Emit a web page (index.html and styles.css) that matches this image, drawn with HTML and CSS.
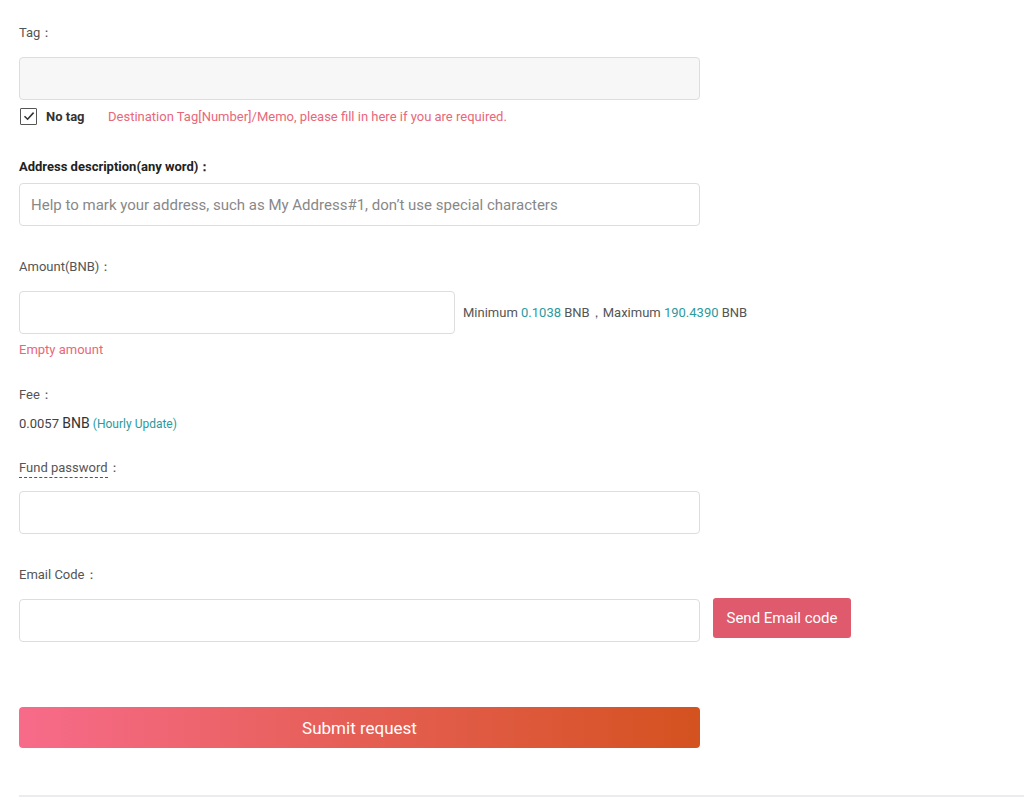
FILE: index.html
```html
<!DOCTYPE html>
<html lang="en">
<head>
  <meta charset="UTF-8" />
  <meta name="viewport" content="width=device-width, initial-scale=1.0"/>
  <title>Withdraw BNB</title>
  <link rel="stylesheet" href="styles.css">
</head>
<body>
  <form class="withdraw">

    <!-- Tag -->
    <div class="field tag-field">
      <label class="label">Tag：</label>
      <input class="input input-grey" type="text" />
      <div class="tag-row">
        <span class="checkbox">
          <svg width="14" height="14" viewBox="0 0 14 14"><path d="M2.5 7.2 L5.6 10.2 L11.6 3.6" fill="none" stroke="#333" stroke-width="1.6"/></svg>
        </span>
        <span class="no-tag">No tag</span>
        <span class="hint-red">Destination Tag[Number]/Memo, please fill in here if you are required.</span>
      </div>
    </div>

    <!-- Address description -->
    <div class="field">
      <label class="label label-bold">Address description(any word)：</label>
      <input class="input" type="text" placeholder="Help to mark your address, such as My Address#1, don’t use special characters" />
    </div>

    <!-- Amount -->
    <div class="field field-amount">
      <label class="label">Amount(BNB)：</label>
      <div class="amount-row">
        <input class="input input-amount" type="text" />
        <span class="limits">Minimum <em>0.1038</em> BNB，Maximum <em>190.4390</em> BNB</span>
      </div>
      <p class="hint-red error">Empty amount</p>
    </div>

    <!-- Fee -->
    <div class="field field-fee">
      <label class="label">Fee：</label>
      <p class="fee">0.0057 <b>BNB</b> <span class="teal">(Hourly Update)</span></p>
    </div>

    <!-- Fund password -->
    <div class="field field-fund">
      <label class="label"><span class="dotted">Fund password</span>：</label>
      <input class="input" type="password" />
    </div>

    <!-- Email code -->
    <div class="field">
      <label class="label">Email Code：</label>
      <div class="code-row">
        <input class="input" type="text" />
        <button type="button" class="btn-send">Send Email code</button>
      </div>
    </div>

    <button type="button" class="btn-submit">Submit request</button>
  </form>
  <div class="bottom-line"></div>
</body>
</html>
```

FILE: styles.css
```css
* {
  margin: 0;
  padding: 0;
  box-sizing: border-box;
}
body {
  font-family: Roboto, "Liberation Sans", sans-serif;
  font-size: 13px;
  color: #555;
  background: #fff;
  padding: 0 0 0 19px;
}
.withdraw {
  width: 681px;
  padding-top: 24px;
}
.field {
  display: flex;
  flex-direction: column;
  margin-bottom: 32px;
}
.label {
  display: block;
  line-height: 18px;
  margin-bottom: 15px;
  color: #555;
}
.label-bold {
  font-weight: bold;
  color: #222;
  margin-bottom: 7px;
}
.input {
  width: 100%;
  height: 43px;
  border: 1px solid #ddd;
  border-radius: 4px;
  background: #fff;
  padding: 0 11px;
  font-family: inherit;
  font-size: 15px;
  color: #333;
  outline: none;
}
.input::placeholder {
  color: #888;
}
.input-grey {
  background: #f7f7f7;
}
.tag-field {
  margin-bottom: 33px;
}
.tag-row {
  display: flex;
  align-items: center;
  margin-top: 7px;
  height: 18px;
}
.checkbox {
  width: 17px;
  height: 17px;
  border: 1.5px solid #555;
  border-radius: 1px;
  display: flex;
  align-items: center;
  justify-content: center;
  margin-left: 1px;
}
.no-tag {
  font-weight: bold;
  color: #333;
  margin-left: 9px;
  width: 62px;
}
.hint-red {
  color: #e8677a;
}
.amount-row {
  display: flex;
  align-items: center;
}
.input-amount {
  flex: 0 0 436px;
}
.limits {
  margin-left: 8px;
  color: #555;
  white-space: nowrap;
}
.limits em {
  font-style: normal;
  color: #2a9a9e;
}
.error {
  margin-top: 7px;
  line-height: 18px;
}
.field-amount {
  margin-bottom: 27px;
}
.field-fee {
  margin-bottom: 26px;
}
.field-fee .label {
  margin-bottom: 10px;
}
.fee {
  line-height: 18px;
  color: #444;
}
.fee b {
  font-weight: normal;
  font-size: 14px;
  color: #333;
}
.teal {
  color: #2a9a9e;
  font-size: 12px;
}
.field-fund .label {
  margin-bottom: 14px;
}
.dotted {
  border-bottom: 1px dashed #555;
  padding-bottom: 2px;
}
.code-row {
  display: flex;
  align-items: flex-start;
}
.code-row .input {
  flex: 0 0 681px;
}
.btn-send {
  flex: 0 0 138px;
  height: 40px;
  margin-left: 13px;
  margin-top: -1px;
  background: #e05a6d;
  color: #fff;
  border: none;
  border-radius: 3px;
  font-family: inherit;
  font-size: 15px;
  cursor: pointer;
}
.btn-submit {
  display: block;
  width: 681px;
  height: 41px;
  margin-top: 65px;
  border: none;
  border-radius: 4px;
  background: linear-gradient(to right, #f76b8a, #d4521f);
  color: #fff;
  font-family: inherit;
  font-size: 17px;
  cursor: pointer;
}
.bottom-line {
  height: 2px;
  background: #ebebf0;
  margin-top: 47px;
}
```
